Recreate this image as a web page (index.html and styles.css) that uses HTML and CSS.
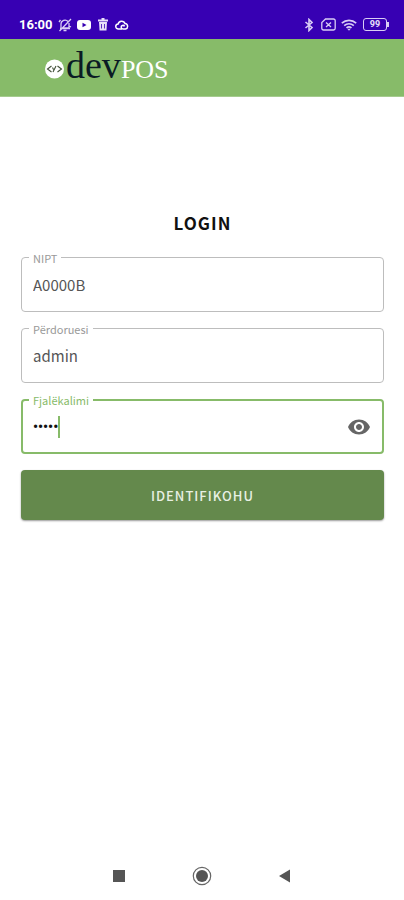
FILE: index.html
```
<!DOCTYPE html>
<html lang="sq">
<head>
<meta charset="utf-8">
<meta name="viewport" content="width=device-width, initial-scale=1">
<title>devPOS – Login</title>
<link rel="stylesheet" href="styles.css">
</head>
<body>
<div class="status">
  <div class="status-group">
    <span class="clock">16:00</span>
    <svg width="14" height="14" viewBox="0 0 14 14" fill="none" stroke="#d9cdf5" stroke-width="1.3" aria-hidden="true"><path d="M3 10V6a4 4 0 0 1 7-2.500M11 5v5H5M2 10.500h10M5.500 12.500h3M1.500 13 13 1M1 4l1.500-2M11 8l2 1"/></svg>
    <svg width="14" height="12" viewBox="0 0 14 12" aria-hidden="true"><rect y="1" width="14" height="10" rx="3" fill="#fff"/><path d="M5.500 3.700v4.600L9.500 6z" fill="#3700b3"/></svg>
    <svg width="14" height="13" viewBox="-1 0 14 13" fill="none" aria-hidden="true"><path d="M1 2.500h10M4.500 1h3" stroke="#e8e0fa" stroke-width="1.800"/><path d="M2 4h8l-.5 8.500h-7z" fill="#e8e0fa"/><path d="M4.500 6v4.500M7.500 6v4.500" stroke="#3700b3" stroke-width=".8"/></svg>
    <svg width="14" height="12" viewBox="0 0 14 12" fill="none" stroke="#fff" stroke-width="1.500" aria-hidden="true"><path d="M7 10H3.500a2.500 2.500 0 0 1-.4-5A3.600 3.600 0 0 1 10 4.500a2.800 2.800 0 0 1 .5 5.500H8a1.800 1.800 0 1 1 1.600-2.600"/></svg>
  </div>
  <div class="status-group">
    <svg width="10" height="14" viewBox="0 0 10 14" fill="none" stroke="#d9cdf5" stroke-width="1.600" aria-hidden="true"><path d="M1.500 4 8 9.500 5 12.500v-11l3 3L1.500 10"/></svg>
    <svg class="sim" width="15" height="13" viewBox="0 0 15 13" fill="none" stroke="#d9cdf5" stroke-width="1.300" aria-hidden="true"><path d="M4.500 1h8a1.700 1.700 0 0 1 1.700 1.700v7.600a1.700 1.700 0 0 1-1.700 1.700h-10A1.700 1.700 0 0 1 .8 10.300V4.500zM5 4.500l5 4.500M10 4.500 5 9"/></svg>
    <svg width="16" height="12" viewBox="0 0 16 12" fill="none" stroke="#d9cdf5" stroke-width="1.600" aria-hidden="true"><path d="M.8 4.200a10.500 10.500 0 0 1 14.400 0M3.200 6.600a7 7 0 0 1 9.600 0M5.500 8.900a3.800 3.800 0 0 1 5 0"/><path d="m6.300 9.800 1.700 2 1.700-2z" fill="#d9cdf5" stroke="none"/></svg>
    <span class="battery">99</span>
  </div>
</div>

<header class="appbar">
  <svg width="19" height="20" viewBox="0 0 19 20" aria-hidden="true"><circle cx="9.500" cy="10" r="9.500" fill="#fff"/><path d="M6.500 7 2.500 10l4 3M12.500 7l4 3-4 3M8 13l3-6M7.500 8.500l1 2" fill="none" stroke="#414f38" stroke-width="1.100"/></svg>
  <span class="brand"><span class="brand-dev">dev</span><span class="brand-pos">POS</span></span>
</header>

<main class="login">
  <h1>LOGIN</h1>
  <form onsubmit="return false">
    <div class="field">
      <label for="nipt">NIPT</label>
      <input id="nipt" type="text" value="A0000B">
    </div>
    <div class="field">
      <label for="user">Përdoruesi</label>
      <input id="user" type="text" value="admin">
    </div>
    <div class="field active">
      <label for="pass">Fjalëkalimi</label>
      <input id="pass" type="password" value="admin">
      <span class="caret"></span>
      <button class="reveal" type="button" aria-label="Shfaq fjalëkalimin">
        <svg width="24" height="24" viewBox="0 0 24 24" fill="#666" aria-hidden="true"><path d="M12 4.500C7 4.500 2.730 7.610 1 12c1.730 4.390 6 7.500 11 7.500s9.270-3.110 11-7.500c-1.730-4.390-6-7.500-11-7.500zM12 17c-2.760 0-5-2.240-5-5s2.240-5 5-5 5 2.240 5 5-2.240 5-5 5zm0-8c-1.660 0-3 1.340-3 3s1.340 3 3 3 3-1.340 3-3-1.340-3-3-3z"/></svg>
      </button>
    </div>
    <button class="submit" type="submit">IDENTIFIKOHU</button>
  </form>
</main>

<nav class="sysnav">
  <button type="button" aria-label="Recent"><svg width="20" height="20" viewBox="0 0 20 20"><path d="M4 4h12v12H4z" fill="#555"/></svg></button>
  <button type="button" aria-label="Home"><svg width="20" height="20" viewBox="0 0 20 20"><circle cx="10" cy="10" r="8.700" fill="none" stroke="#666" stroke-width="1.200"/><circle cx="10" cy="10" r="6" fill="#555"/></svg></button>
  <button type="button" aria-label="Back"><svg width="20" height="20" viewBox="0 0 20 20"><path d="M15 3.500v13L4 10z" fill="#555"/></svg></button>
</nav>
</body>
</html>
```

FILE: styles.css
```
* { box-sizing: border-box; }

body {
  margin: 0;
  min-height: 100vh;
  display: flex;
  flex-direction: column;
  background: #fff;
  color: #111;
  font-family: "Noto Sans CJK JP", "Noto Sans", sans-serif;
}

button {
  border: 0;
  padding: 0;
  background: none;
  font: inherit;
}

svg { display: block; flex: none; }

.status {
  height: 39px;
  padding: 10px 14px 0 19px;
  display: flex;
  justify-content: space-between;
  align-items: center;
  background: #3700b3;
  color: #fff;
}

.status-group {
  display: flex;
  align-items: center;
  gap: 5px;
}

.clock {
  font: bold 13px/16px Roboto, sans-serif;
}

.sim { margin: 0 0 0 2px; }

.battery {
  position: relative;
  width: 24px;
  height: 13px;
  margin: 0 3px 0 1px;
  border: 1px solid #d9cdf5;
  border-radius: 3px;
  color: #e8e0fa;
  font: bold 9px/11px Roboto, sans-serif;
  text-align: center;
}

.battery::after {
  content: "";
  position: absolute;
  top: 3px;
  right: -3px;
  width: 2px;
  height: 5px;
  background: #d9cdf5;
}

.appbar {
  height: 58px;
  padding: 2px 45px 0;
  display: flex;
  align-items: center;
  gap: 2px;
  background: #87bb69;
  border-bottom: 1px solid #a5cb8f;
}

.brand {
  font-family: "Liberation Serif", serif;
  line-height: 48px;
  white-space: nowrap;
}

.brand-dev { font-size: 38px; color: #0b1b24; }
.brand-pos { font-size: 26px; color: #fff; }

.login {
  flex: 1;
  padding: 111px 20px 0 21px;
}

h1 {
  margin: 0 0 19px;
  font-size: 17px;
  line-height: 30px;
  font-weight: 700;
  letter-spacing: 1px;
  text-align: center;
}

form {
  display: flex;
  flex-direction: column;
  gap: 16px;
}

.field {
  position: relative;
  height: 55px;
  padding: 0 12px 0 11px;
  display: flex;
  align-items: center;
  border: 1px solid #bdbdbd;
  border-radius: 4px;
}

.field label {
  position: absolute;
  top: -8px;
  left: 7px;
  padding: 0 4px;
  background: #fff;
  color: #999;
  font-size: 11px;
  line-height: 16px;
}

.field input {
  flex: 1;
  min-width: 0;
  padding: 0;
  border: 0;
  outline: 0;
  background: none;
  color: #555;
  font: inherit;
  font-size: 15px;
  line-height: 24px;
}

.field.active {
  border: 2px solid #87bb69;
  padding: 0 11px 0 10px;
}

.field.active label {
  top: -9px;
  left: 6px;
  color: #87bb69;
}

.field.active input {
  flex: none;
  field-sizing: content;
  color: #111;
  font-family: Roboto, sans-serif;
  font-size: 14px;
  font-weight: 700;
}

.caret {
  width: 2px;
  height: 22px;
  background: #87bb69;
}

.reveal { margin-left: auto; }

.submit {
  height: 50px;
  border-radius: 4px;
  background: #64894c;
  box-shadow: 0 1px 2px #0006;
  color: #e8f0e3;
  font-size: 13px;
  font-weight: 500;
  letter-spacing: 1px;
}

.sysnav {
  height: 48px;
  padding: 0 109px;
  display: flex;
  align-items: center;
  justify-content: space-between;
}
```
